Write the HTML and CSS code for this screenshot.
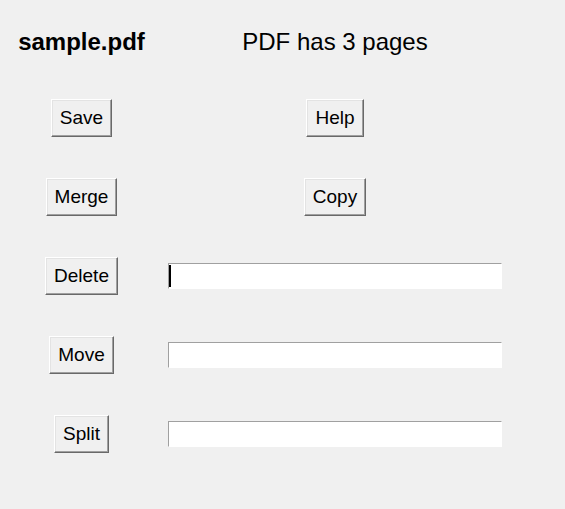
FILE: index.html
```html
<!DOCTYPE html>
<html>
<head>
<meta charset="utf-8">
<title>PDF Tool</title>
<link rel="stylesheet" href="styles.css">
</head>
<body>
<div class="app">
  <div class="title title-file">sample.pdf</div>
  <div class="title title-info">PDF has 3 pages</div>

  <button class="btn">Save</button>
  <button class="btn">Help</button>

  <button class="btn">Merge</button>
  <button class="btn">Copy</button>

  <button class="btn">Delete</button>
  <div class="entry focused"><input class="entry-input" type="text"></div>

  <button class="btn">Move</button>
  <div class="entry"><input class="entry-input" type="text"></div>

  <button class="btn">Split</button>
  <div class="entry"><input class="entry-input" type="text"></div>
</div>
</body>
</html>
```

FILE: styles.css
```css
html, body {
  margin: 0;
  padding: 0;
  background: #f0f0f0;
}

body {
  font-family: "Liberation Sans", Arial, sans-serif;
  color: #000;
  width: 565px;
  height: 509px;
  overflow: hidden;
}

.app {
  display: grid;
  grid-template-columns: 163px 334px;
  grid-template-rows: 78px repeat(5, 79px);
  column-gap: 5px;
  align-items: center;
  justify-items: center;
}

.title {
  font-size: 24px;
  line-height: 28px;
  padding-top: 6px;
  white-space: nowrap;
}

.title-file {
  font-weight: bold;
}

.btn {
  box-sizing: border-box;
  height: 38px;
  margin: 0;
  padding: 0 8px;
  font-family: "Liberation Sans", Arial, sans-serif;
  font-size: 19px;
  line-height: 22px;
  color: #000;
  background: #f0f0f0;
  border: 1px solid;
  border-color: #ffffff #696969 #696969 #ffffff;
  box-shadow: inset -1px -1px 0 #a0a0a0, inset 1px 1px 0 #e3e3e3;
  border-radius: 0;
  cursor: default;
}

.entry {
  position: relative;
  justify-self: stretch;
  height: 26px;
}

.entry-input {
  box-sizing: border-box;
  display: block;
  width: 100%;
  height: 26px;
  margin: 0;
  padding: 0 3px;
  font-family: "Liberation Sans", Arial, sans-serif;
  font-size: 18px;
  background: #ffffff;
  border: 1px solid;
  border-color: #a0a0a0 #ffffff #ffffff #a0a0a0;
  outline: none;
  border-radius: 0;
}

.entry.focused::before {
  content: "";
  position: absolute;
  left: 1px;
  top: 2px;
  width: 2px;
  height: 22px;
  background: #000;
}
```
